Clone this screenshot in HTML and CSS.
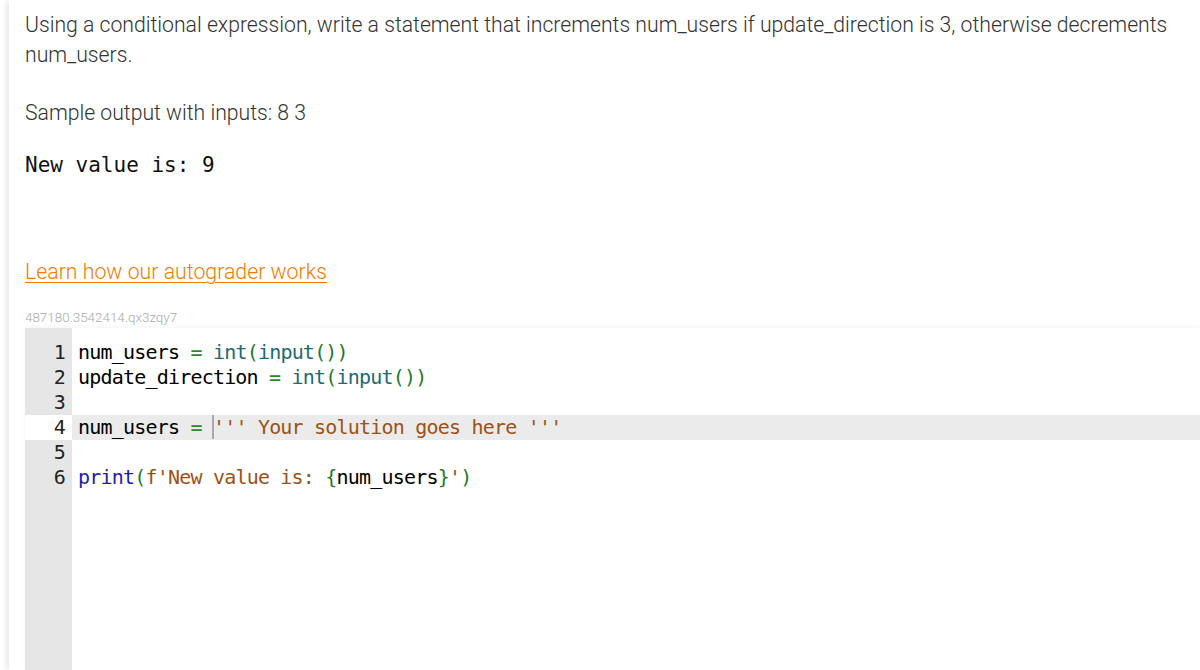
FILE: index.html
```html
<!DOCTYPE html>
<html>
<head>
<meta charset="utf-8">
<link rel="stylesheet" href="styles.css">
</head>
<body>
<div class="page">
  <p class="prompt">Using a conditional expression, write a statement that increments num_users if update_direction is 3, otherwise decrements num_users.</p>
  <p class="prompt sample-label">Sample output with inputs: 8 3</p>
  <pre class="sample">New value is: 9</pre>
  <a class="learn" href="#">Learn how our autograder works</a>
  <div class="ident">487180.3542414.qx3zqy7</div>
  <div class="editor">
    <div class="line"><span class="gut">1</span><span class="code"><span class="v">num_users</span> <span class="op">=</span> <span class="bi">int</span><span class="p">(</span><span class="bi">input</span><span class="p">())</span></span></div>
    <div class="line"><span class="gut">2</span><span class="code"><span class="v">update_direction</span> <span class="op">=</span> <span class="bi">int</span><span class="p">(</span><span class="bi">input</span><span class="p">())</span></span></div>
    <div class="line"><span class="gut">3</span><span class="code"></span></div>
    <div class="line active"><span class="gut">4</span><span class="code"><span class="v">num_users</span> <span class="op">=</span> <span class="cursor"></span><span class="s">''' Your solution goes here '''</span></span></div>
    <div class="line"><span class="gut">5</span><span class="code"></span></div>
    <div class="line"><span class="gut">6</span><span class="code"><span class="kw">print</span><span class="p">(</span><span class="s">f'New value is: </span><span class="p">{</span><span class="v">num_users</span><span class="p">}</span><span class="s">'</span><span class="p">)</span></span></div>
    <div class="line filler"><span class="gut"></span><span class="code"></span></div>
  </div>
</div>
</body>
</html>
```

FILE: styles.css
```css
html, body {
  margin: 0;
  padding: 0;
  background: #fff;
  overflow: hidden;
}

.page {
  margin-left: 9px;
  padding-left: 16px;
  padding-top: 10px;
  min-height: 660px;
  box-shadow: -4px 0 5px -1px rgba(0, 0, 0, 0.09);
  font-family: Roboto, "Liberation Sans", sans-serif;
  font-weight: 300;
  color: #333;
  display: flex;
  flex-direction: column;
  align-items: flex-start;
}

.prompt {
  margin: 0;
  font-size: 21.2px;
  line-height: 30px;
  padding-right: 20px;
}

.sample-label {
  margin-top: 28px;
}

.sample {
  margin: 22px 0 0 0;
  font-family: "DejaVu Sans Mono", monospace;
  font-size: 21px;
  line-height: 30px;
  color: #111;
}

.learn {
  margin-top: 77px;
  font-size: 21.3px;
  line-height: 30px;
  color: #f47b00;
  text-decoration: underline;
  text-underline-offset: 3px;
  text-decoration-thickness: 1px;
}

.ident {
  margin-top: 23px;
  font-size: 13.4px;
  line-height: 16px;
  color: #aaa;
}

.editor {
  margin-top: 2px;
  align-self: stretch;
  flex: 1;
  display: flex;
  flex-direction: column;
  padding-top: 12px;
  position: relative;
  box-shadow: 0 -2px 4px rgba(0, 0, 0, 0.04);
  background: linear-gradient(to right, #e6e6e6 0, #e6e6e6 47px, #fff 47px);
  font-family: "DejaVu Sans Mono", monospace;
  font-size: 20px;
  letter-spacing: -0.8px;
  color: #000;
}

.line {
  display: flex;
  height: 25px;
  line-height: 25px;
  white-space: pre;
}

.filler {
  flex: 1;
}

.gut {
  width: 47px;
  box-sizing: border-box;
  padding-right: 7px;
  text-align: right;
  color: #222;
  flex: none;
}

.code {
  padding-left: 6px;
  flex: 1;
}

.active .gut {
  background: #fff;
}

.active .code {
  background: #ebebeb;
}

.cursor {
  display: inline-block;
  width: 0;
  height: 24px;
  vertical-align: top;
  border-left: 2px solid #aaa;
  margin-left: -1px;
  margin-right: -1px;
}

.v { color: #000; }
.op { color: #2a8a2a; }
.bi { color: #1d6b73; }
.p { color: #1f7a1f; }
.kw { color: #1f1fa8; }
.s { color: #9c5216; }
```
